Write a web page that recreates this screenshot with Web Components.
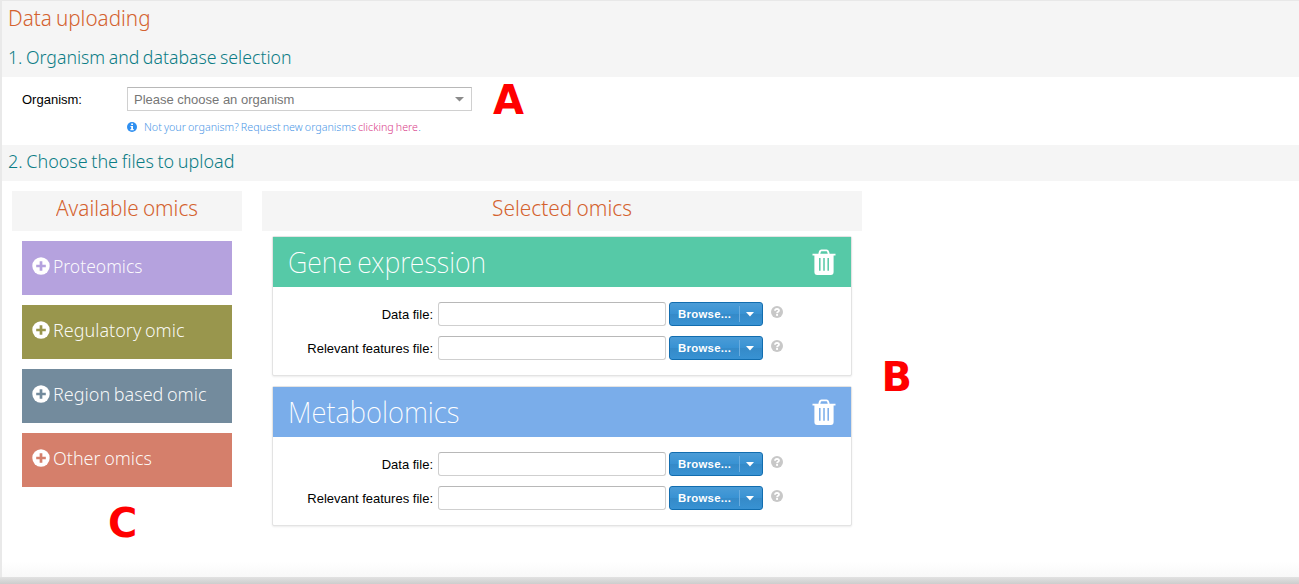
<!DOCTYPE html>
<html lang="en">
<head>
<meta charset="utf-8">
<title>Data uploading</title>
<style>
body{margin:0;background:#fff;font:13px/16px "Liberation Sans",Arial,sans-serif;color:#000;overflow:hidden}
</style>
</head>
<body>
<upload-page></upload-page>
<script>
const define = (name, html, init) => {
  const t = document.createElement('template');
  t.innerHTML = html;
  customElements.define(name, class extends HTMLElement {
    constructor() {
      super();
      this.attachShadow({mode: 'open'}).append(t.content.cloneNode(true));
    }
    connectedCallback() { if (init) init(this, this.shadowRoot); }
  });
};

// Light humanist label, condensed or expanded to the width given in "w".
define('light-text', `<style>
:host{display:inline-block;white-space:nowrap;font-family:"Noto Sans","Open Sans",sans-serif;font-weight:var(--weight,300);word-spacing:-.06em}
span{display:inline-block;transform-origin:0 50%}
</style><span><slot></slot></span>`, (el, root) => {
  const s = root.querySelector('span'), w = +el.getAttribute('w');
  const n = s.getBoundingClientRect().width;
  if (n && w) { s.style.transform = 'scaleX(' + w / n + ')'; el.style.width = w + 'px'; }
});

define('section-bar', `<style>
:host{display:flex;height:36px;box-sizing:border-box;background:#f5f5f5;padding-left:6px;color:#0b7c85;font-size:19px;line-height:32px}
</style><slot></slot>`);

define('column-title', `<style>
:host{display:flex;justify-content:center;height:40px;background:#f5f5f5;color:#d4622f;font-size:22.5px;line-height:33px}
</style><slot></slot>`);

define('organism-select', `<style>
:host{display:flex;align-items:center;justify-content:space-between;box-sizing:border-box;width:345px;height:24px;border:1px solid #d0d0d0;border-top-color:#b8b8b8;padding:1px 7px 0 6px;color:#767676;background:#fff;line-height:17px}
</style><slot></slot><svg width="9" height="5"><path d="M0 0H9L4.5 4.6Z" fill="#8b8b8b"/></svg>`);

define('omic-button', `<style>
:host{display:flex;align-items:flex-start;box-sizing:border-box;height:54px;padding:16px 0 0 9.5px;gap:3.5px;color:rgba(255,255,255,.95);font-size:19px;line-height:19px;--weight:260}
svg{flex:none}
</style><svg width="18" height="18" viewBox="0 0 18 18"><circle cx="9" cy="9" r="8.7" fill="#fff"/><path d="M9 4.2v9.6M4.2 9h9.6" style="stroke:var(--c)" stroke-width="2.7"/></svg><slot></slot>`,
(el) => { el.style.setProperty('--c', el.getAttribute('color')); el.style.background = el.getAttribute('color'); });

define('file-row', `<style>
:host{display:flex;height:24px;align-items:center}
label{width:160px;text-align:right;margin-right:5px;padding-top:1px}
.in{width:228px;height:24px;box-sizing:border-box;border:1px solid #cfcfcf;border-top-color:#b8b8b8;border-radius:3px;margin-right:3px}
.btn{display:flex;align-items:center;box-sizing:border-box;width:94px;height:24px;border:1px solid #126daf;border-radius:3px;background:linear-gradient(#4b9cd7,#3892d3 50%,#358ac8 51%,#3892d3);color:#fff;font:bold 11.4px/14px "Liberation Sans",Arial,sans-serif;padding-left:8px;margin-right:8px}
.btn b{width:62px;height:16px;line-height:17px;box-sizing:border-box;border-right:1px solid #6baddf;letter-spacing:.28px}
.btn svg{margin-left:6px}
.q{margin-top:-4px}
</style><label><slot></slot></label><div class="in"></div><div class="btn"><b>Browse...</b><svg width="8" height="5"><path d="M0 0H8L4 4.6Z" fill="#fff"/></svg></div>
<svg class="q" width="12" height="12" viewBox="0 0 12 12"><circle cx="6" cy="6" r="6" fill="#c8c8c8"/><path d="M4 4.7Q4.1 2.9 6 2.9Q8 3 8 4.5Q8 5.4 6.8 6Q6.1 6.4 6.1 7.2" fill="none" stroke="#fff" stroke-width="1.8"/><rect x="5.1" y="8" width="1.9" height="1.9" fill="#fff"/></svg>`);

define('omic-card', `<style>
:host{display:block;box-sizing:border-box;width:580px;height:140px;border:1px solid #e3e3e3;border-radius:2px;box-shadow:0 1px 2px rgba(0,0,0,.08);background:#fff}
header{display:flex;justify-content:space-between;height:50px;background:var(--c);color:#fff;font-size:29px;line-height:50px;padding:0 15px;--weight:250}
.rows{display:flex;flex-direction:column;gap:10px;padding-top:15px}
::slotted(light-text){--weight:240}
svg{margin-top:12px}
</style><header><slot name="title"></slot><svg width="24" height="27" viewBox="0 0 24 27"><path d="M7.2 5L8 2.4Q8.3 1.4 9.4 1.4h5.2Q15.7 1.4 16 2.4L16.8 5" fill="none" stroke="#fff" stroke-width="1.9"/><path d="M.5 4.8H23.5V6.6H21.6V23Q21.6 26 18.8 26H5.2Q2.4 26 2.4 23V6.6H.5Z" fill="#fff"/><path d="M7.8 9V21.7M12 9V21.7M16.2 9V21.7" style="stroke:var(--c)" stroke-width="1.5"/></svg></header>
<div class="rows"><file-row>Data file:</file-row><file-row>Relevant features file:</file-row></div>`,
(el) => el.style.setProperty('--c', el.getAttribute('color')));

// Callout letter lying over the page.
define('call-out', `<style>
:host{position:absolute;font:bold 40px/40px "DejaVu Sans",sans-serif;color:#f00}
</style><slot></slot>`);

define('upload-page', `<style>
:host{display:flex;flex-direction:column;position:relative;width:1299px;height:584px}
main{flex:1;border-left:2px solid #e9e9e9;box-sizing:border-box;background:linear-gradient(#fff 0 562px,#f8f8f8 577px)}
h1{margin:0;height:41px;box-sizing:border-box;border-top:1px solid #e8e8e8;background:#f5f5f5;padding-left:6px;color:#d4622f;font-size:22.5px;line-height:34px;font-weight:300}
.org{display:grid;grid-template-columns:105px 1fr;height:68px;box-sizing:border-box;padding:10px 0 0 20px;background:#fff;align-content:start}
.org label{line-height:25px}
.note{grid-column:2;display:flex;align-items:center;margin-top:7px;height:16px;font-size:11.5px;line-height:16px;color:#4d97e6}
.note light-text{margin-top:-1px}
.note svg{margin-right:7px}
.pink{color:#d93b87;margin-left:2px}
.cols{display:flex;gap:20px;padding:10px 0 0 10px}
.left{width:230px}
.list{display:flex;flex-direction:column;gap:10px;padding:10px}
.right{width:600px}
.cards{display:flex;flex-direction:column;gap:10px;padding:5px 10px}
footer{height:7px;background:linear-gradient(#e2e2e2,#cdcdcd)}
</style>
<main>
<h1><light-text w="142.5">Data uploading</light-text></h1>
<section-bar><light-text w="283.5">1. Organism and database selection</light-text></section-bar>
<div class="org"><label>Organism:</label><organism-select>Please choose an organism</organism-select>
<div class="note"><svg width="10" height="10" viewBox="0 0 10 10"><circle cx="5" cy="5" r="5" fill="#2f8ff0"/><path d="M4.2 1.5h1.8v1.5H4.2zM3.5 4h2.5v3.1h.7v1.1H3.4V7.1h.8V5H3.5z" fill="#fff"/></svg><light-text w="212">Not your organism? Request new organisms</light-text><light-text class="pink" w="60">clicking here</light-text><light-text w="3">.</light-text></div></div>
<section-bar><light-text w="226.5">2. Choose the files to upload</light-text></section-bar>
<div class="cols">
<div class="left"><column-title><light-text w="142">Available omics</light-text></column-title>
<div class="list">
<omic-button color="#b5a2de"><light-text w="89.5">Proteomics</light-text></omic-button>
<omic-button color="#99964d"><light-text w="131.5">Regulatory omic</light-text></omic-button>
<omic-button color="#738b9d"><light-text w="153.5">Region based omic</light-text></omic-button>
<omic-button color="#d57f6b"><light-text w="99">Other omics</light-text></omic-button>
</div></div>
<div class="right"><column-title><light-text w="140">Selected omics</light-text></column-title>
<div class="cards">
<omic-card color="#56c9a7"><light-text slot="title" w="198">Gene expression</light-text></omic-card>
<omic-card color="#7aadea"><light-text slot="title" w="171.5">Metabolomics</light-text></omic-card>
</div></div>
</div>
</main>
<footer></footer>
<call-out style="left:493px;top:80px">A</call-out>
<call-out style="left:881.5px;top:357px">B</call-out>
<call-out style="left:108px;top:503px">C</call-out>`);
</script>
</body>
</html>
